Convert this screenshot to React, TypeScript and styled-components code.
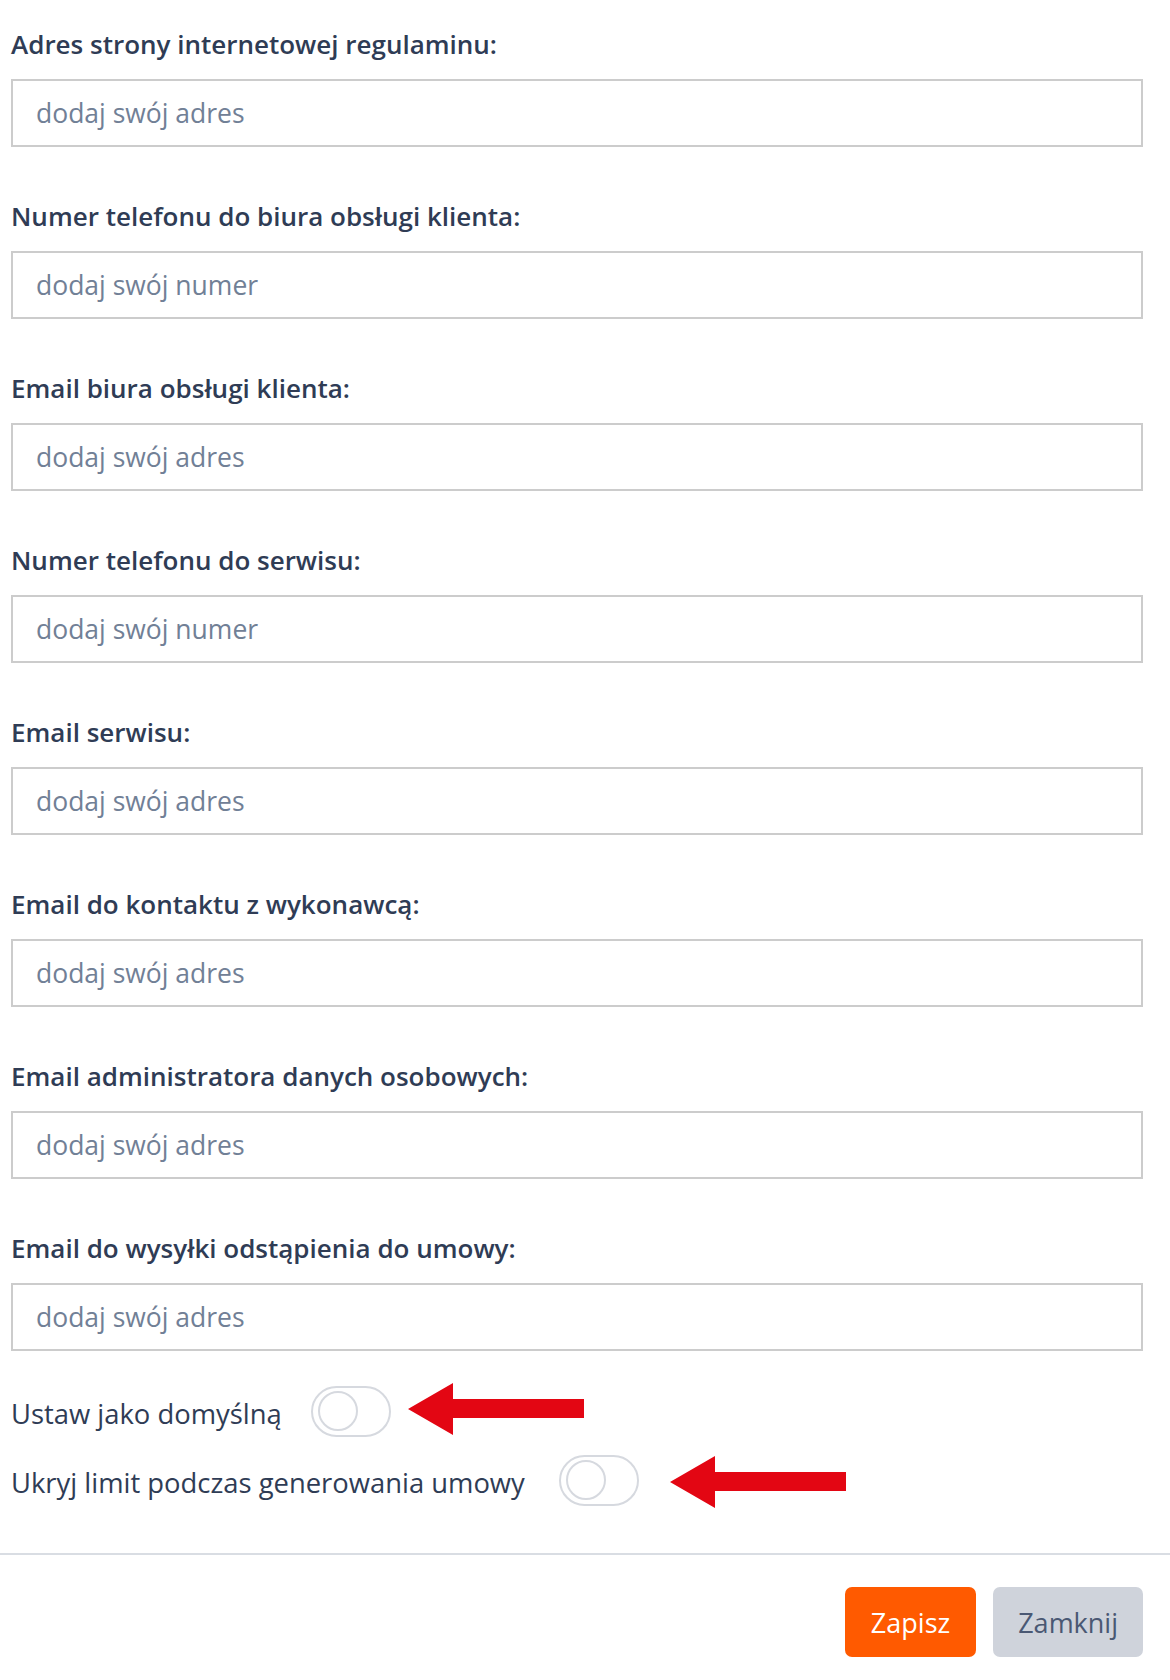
import React from "react";
import styled, { createGlobalStyle } from "styled-components";

const GlobalStyle = createGlobalStyle`
  html, body {
    margin: 0;
    padding: 0;
    background: #ffffff;
  }
  body {
    font-family: "Open Sans", "Noto Sans", "Liberation Sans", sans-serif;
    color: #2d3748;
  }
  * { box-sizing: border-box; }
`;

const Page = styled.div`
  width: 1170px;
  background: #ffffff;
`;

const Form = styled.form`
  display: flex;
  flex-direction: column;
  padding: 25px 27px 0 11px;
`;

const FieldList = styled.div`
  display: flex;
  flex-direction: column;
  gap: 50px;
`;

const Field = styled.div`
  display: flex;
  flex-direction: column;
`;

const Label = styled.label`
  font-size: 26px;
  line-height: 39px;
  font-weight: 600;
  color: #2f3c55;
  margin-bottom: 15px;
`;

const Input = styled.input`
  height: 68px;
  width: 100%;
  border: 2px solid #cccccc;
  border-radius: 0;
  padding: 0 23px;
  font-family: inherit;
  font-size: 26.5px;
  color: #2d3748;
  background: #ffffff;
  outline: none;
  &::placeholder {
    color: #718096;
    opacity: 1;
  }
`;

const ToggleList = styled.div`
  display: flex;
  flex-direction: column;
  gap: 17px;
  margin-top: 34px;
  padding-bottom: 47px;
`;

const ToggleRow = styled.div`
  display: flex;
  align-items: center;
  height: 52px;
`;

const ToggleLabel = styled.span<{ $gap: number }>`
  font-size: 27.4px;
  line-height: 39px;
  font-weight: 400;
  color: #2f3c55;
  margin-top: 4px;
  margin-right: ${(p) => p.$gap}px;
`;

const Switch = styled.button`
  position: relative;
  flex: none;
  width: 80px;
  height: 51px;
  padding: 0 0 0 5px;
  border: 2px solid #d6d9df;
  border-radius: 26px;
  background: #ffffff;
  display: flex;
  align-items: center;
  cursor: pointer;
`;

const Knob = styled.span`
  display: block;
  width: 40px;
  height: 40px;
  border-radius: 50%;
  border: 2px solid #d6d9df;
  background: #ffffff;
`;

const ArrowSvg = styled.svg<{ $offset: number; $shift: number }>`
  flex: none;
  margin-left: ${(p) => p.$offset}px;
  transform: translateY(${(p) => p.$shift}px);
`;

const Divider = styled.hr`
  margin: 0;
  border: none;
  height: 2px;
  background: #d9dde3;
`;

const Footer = styled.div`
  display: flex;
  justify-content: flex-end;
  gap: 17px;
  padding: 32px 27px 23px 11px;
`;

const Button = styled.button<{ $variant: "primary" | "secondary" }>`
  height: 70px;
  padding: 0 ${(p) => (p.$variant === "primary" ? 26 : 25)}px;
  border: none;
  border-radius: 7px;
  font-family: inherit;
  font-size: 27px;
  cursor: pointer;
  background: ${(p) => (p.$variant === "primary" ? "#ff5a00" : "#cfd3db")};
  color: ${(p) => (p.$variant === "primary" ? "#ffffff" : "#4a5873")};
`;

const Arrow: React.FC<{ offset: number; shift: number }> = ({ offset, shift }) => (
  <ArrowSvg $offset={offset} $shift={shift} width="176" height="52" viewBox="0 0 176 52">
    <polygon points="0,26 45,0 45,16 176,16 176,35 45,35 45,52" fill="#e30613" />
  </ArrowSvg>
);

const fields: { label: string; placeholder: string }[] = [
  { label: "Adres strony internetowej regulaminu:", placeholder: "dodaj swój adres" },
  { label: "Numer telefonu do biura obsługi klienta:", placeholder: "dodaj swój numer" },
  { label: "Email biura obsługi klienta:", placeholder: "dodaj swój adres" },
  { label: "Numer telefonu do serwisu:", placeholder: "dodaj swój numer" },
  { label: "Email serwisu:", placeholder: "dodaj swój adres" },
  { label: "Email do kontaktu z wykonawcą:", placeholder: "dodaj swój adres" },
  { label: "Email administratora danych osobowych:", placeholder: "dodaj swój adres" },
  { label: "Email do wysyłki odstąpienia do umowy:", placeholder: "dodaj swój adres" },
];

const toggles = [
  { label: "Ustaw jako domyślną", gap: 29, offset: 17, shift: -2 },
  { label: "Ukryj limit podczas generowania umowy", gap: 34, offset: 31, shift: 2 },
];

export default function App() {
  return (
    <Page>
      <GlobalStyle />
      <Form onSubmit={(e) => e.preventDefault()}>
        <FieldList>
          {fields.map((f, i) => (
            <Field key={i}>
              <Label htmlFor={`field-${i}`}>{f.label}</Label>
              <Input id={`field-${i}`} type="text" placeholder={f.placeholder} />
            </Field>
          ))}
        </FieldList>
        <ToggleList>
          {toggles.map((t, i) => (
            <ToggleRow key={i}>
              <ToggleLabel $gap={t.gap}>{t.label}</ToggleLabel>
              <Switch type="button" role="switch" aria-checked={false}>
                <Knob />
              </Switch>
              <Arrow offset={t.offset} shift={t.shift} />
            </ToggleRow>
          ))}
        </ToggleList>
      </Form>
      <Divider />
      <Footer>
        <Button $variant="primary" type="button">Zapisz</Button>
        <Button $variant="secondary" type="button">Zamknij</Button>
      </Footer>
    </Page>
  );
}
